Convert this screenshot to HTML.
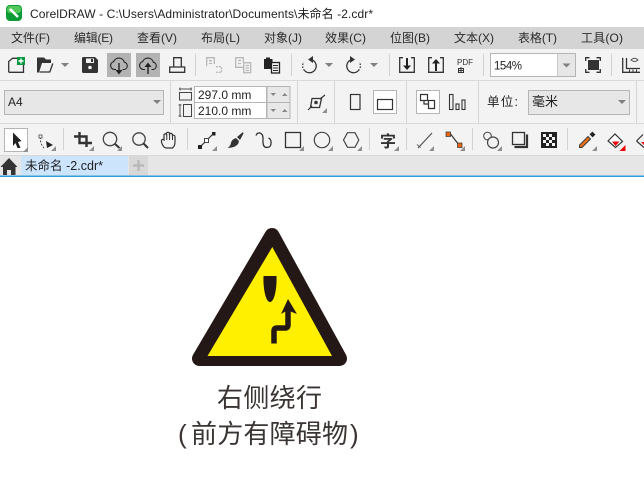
<!DOCTYPE html>
<html>
<head>
<meta charset="utf-8">
<style>
html,body{margin:0;padding:0;background:#fff;width:644px;height:496px;overflow:hidden}
svg{display:block}
text{font-family:"Liberation Sans","Noto Sans CJK SC",sans-serif;fill:#222;font-size:12px}
.m{font-size:12px;fill:#2a2a2a}
.s{stroke:#333;fill:none;stroke-width:1.3}
.g{stroke:#b8b8b8;fill:none;stroke-width:1.3}
</style>
</head>
<body>
<svg width="644" height="496" viewBox="0 0 644 496" xmlns="http://www.w3.org/2000/svg">
<defs>
<path id="c" d="M0 0V-5L-5 0Z" fill="#8f8f8f"/>
<path id="d" d="M0 0H8L4 4Z" fill="#808080"/>
<rect id="v" width="1" height="22" fill="#d2d2d2"/>
</defs>
<rect width="644" height="496" fill="#fff"/>

<!-- title bar -->
<rect x="6" y="5" width="16" height="16" rx="4" fill="#0d9b35"/>
<rect x="7" y="6" width="14" height="7" rx="3" fill="#52c85a"/>
<path d="M10 9L18 17" stroke="#fff" stroke-width="2.6"/>
<text x="30" y="18" textLength="343" lengthAdjust="spacing">CorelDRAW - C:\Users\Administrator\Documents\未命名 -2.cdr*</text>

<!-- menu -->
<rect y="27" width="644" height="22" fill="#d4d4d4"/>
<text class="m" x="11" y="42" textLength="39">文件(F)</text>
<text class="m" x="74" y="42" textLength="39">编辑(E)</text>
<text class="m" x="137" y="42" textLength="40">查看(V)</text>
<text class="m" x="201" y="42" textLength="39">布局(L)</text>
<text class="m" x="264" y="42" textLength="38">对象(J)</text>
<text class="m" x="325" y="42" textLength="41">效果(C)</text>
<text class="m" x="390" y="42" textLength="40">位图(B)</text>
<text class="m" x="454" y="42" textLength="40">文本(X)</text>
<text class="m" x="518" y="42" textLength="39">表格(T)</text>
<text class="m" x="581" y="42" textLength="42">工具(O)</text>

<!-- toolbars bg -->
<rect y="49" width="644" height="107" fill="#f3f3f3"/>
<rect y="80" width="644" height="1" fill="#d9d9d9"/>
<rect y="123" width="644" height="1" fill="#d9d9d9"/>
<rect y="155" width="644" height="1" fill="#d9d9d9"/>
<rect y="156" width="644" height="20" fill="#e6e6e6"/>
<rect y="175.500" width="644" height="1.500" fill="#2aa0dc"/>

<!-- toolbar 1 -->
<path class="s" d="M8.700 72.300V61.500L12.500 58.300H17M23.500 65V72.300H8.700"/>
<rect x="17" y="57" width="8" height="8" fill="#0b9a40"/>
<path d="M21 58.500V63.500M18.500 61H23.500" stroke="#fff" stroke-width="1.400"/>
<path d="M37 72.500V57.500H44L46 59.500H51V63H42L39 72.500Z" fill="#333"/>
<path class="s" d="M39.500 72H49.800L52.800 63.500"/>
<use href="#d" x="61" y="63"/>
<path d="M82 58.500Q82 57 83.500 57H95L98 60V71.500Q98 73 96.500 73H83.500Q82 73 82 71.500Z" fill="#333"/>
<rect x="86" y="58.500" width="8" height="4.500" fill="#f3f3f3"/>
<rect x="91" y="59" width="2" height="3" fill="#333"/>
<circle cx="90" cy="67.500" r="1.800" fill="#f3f3f3"/>

<rect x="107" y="53" width="24" height="24" fill="#b3b3b3"/>
<rect x="136" y="53" width="24" height="24" fill="#b3b3b3"/>
<path d="M116 69.500H114.500A4 4 0 0 1 113.700 61.600A5.600 5.600 0 0 1 124.300 62.200A3.700 3.700 0 0 1 124 69.500H122.500" fill="none" stroke="#222" stroke-width="1.100"/>
<path d="M119 63V71" stroke="#222" stroke-width="1.400"/>
<path d="M115.500 70H122.500L119 74.500Z" fill="#222"/>
<path d="M145 69.500H143.500A4 4 0 0 1 142.700 61.600A5.600 5.600 0 0 1 153.300 62.200A3.700 3.700 0 0 1 153 69.500H151.500" fill="none" stroke="#222" stroke-width="1.100"/>
<path d="M148 66V74" stroke="#222" stroke-width="1.400"/>
<path d="M144.500 67H151.500L148 62.500Z" fill="#222"/>
<path class="s" d="M173.700 67V57.700H181.300V67M169.700 67H184.700V72.300H169.700Z"/>

<use href="#v" x="195" y="54"/>
<path class="g" d="M206.700 66.300V57.700H214.300V64M209 60.700H212M209 63.500H212"/>
<path class="g" d="M216 66.700H221.500V72.300H216" stroke-dasharray="2 1"/>
<path class="g" d="M243 67.300H235.700V57.700H243.300V62"/>
<rect class="g" x="243.700" y="62.700" width="7" height="10"/>
<path class="g" d="M238 60.500H241M238 63.500H241M245.500 65.500H249M245.500 68H249M245.500 70.500H249"/>
<path d="M264 59H266V57.500H270V59H272.500V69H264Z" fill="#222"/>
<rect x="271.500" y="62.500" width="8" height="10.500" fill="#f3f3f3" stroke="#222" stroke-width="1.300"/>
<path d="M273 65.500H278M273 68H278M273 70.500H278" stroke="#222"/>
<use href="#v" x="291" y="54"/>

<path class="s" d="M311 59.500A6.700 6.700 0 1 1 304.500 70.500"/>
<path class="s" d="M304.500 70.500A6.700 6.700 0 0 1 303.800 62" stroke-dasharray="1.500 1.500"/>
<path d="M313 56L308 59.500L313 63Z" fill="#333"/>
<use href="#d" x="325" y="63"/>
<path class="s" d="M352 59.500A6.700 6.700 0 1 0 358.500 70.500"/>
<path class="s" d="M358.500 70.500A6.700 6.700 0 0 0 359.200 62" stroke-dasharray="1.500 1.500"/>
<path d="M350 56L355 59.500L350 63Z" fill="#333"/>
<use href="#d" x="370" y="63"/>
<use href="#v" x="389" y="54"/>

<path class="s" d="M403 57.700H399.700V72.300H414.300V57.700H411"/>
<path d="M407 58V67" stroke="#222" stroke-width="2"/>
<path d="M403 65.500H411L407 70Z" fill="#222"/>
<path class="s" d="M432 57.700H428.700V72.300H443.300V57.700H440"/>
<path d="M436 62V71" stroke="#222" stroke-width="2"/>
<path d="M432 63.500H440L436 59Z" fill="#222"/>
<text x="457" y="65" style="font-size:8px;fill:#333" textLength="16">PDF</text>
<path d="M458.500 72.500V68.500H463.500V72.500ZM461 67V72.500M458.500 70.500H463.500" stroke="#333" fill="none"/>
<use href="#v" x="483" y="54"/>

<rect x="490.500" y="53.500" width="85" height="23" fill="#fff" stroke="#b5b5b5"/>
<rect x="558" y="54" width="17" height="22" fill="#e6e6e6"/>
<rect x="557" y="54" width="1" height="22" fill="#c8c8c8"/>
<use href="#d" x="562.500" y="63.500"/>
<text x="494" y="69.500" style="font-size:11.500px" textLength="28">154%</text>
<rect x="588" y="60" width="11" height="10" fill="#333"/>
<path class="s" d="M589.500 57.700H585.700V61M596.500 57.700H600.300V61M589.500 72.300H585.700V69M596.500 72.300H600.300V69" stroke-width="1.200"/>
<use href="#v" x="611" y="54"/>
<path class="s" d="M622.700 57.700V72.300H640M626.500 58V68.500H640" stroke-width="1.300"/>
<path d="M629.500 72V69.500M633 72V69.500M636.500 72V69.500" stroke="#333"/>
<path d="M631 60Q634.500 56.500 638 60Q634.500 63 631 60Z" fill="none" stroke="#555"/>

<!-- toolbar 2 -->
<rect x="4.500" y="90.500" width="159" height="24" fill="#e7e7e7" stroke="#b5b5b5"/>
<text x="8" y="106" style="font-size:12px">A4</text>
<use href="#d" x="153" y="100"/>
<rect x="170" y="81" width="1" height="42" fill="#d6d6d6"/>

<path d="M179 89H192M180 87.500V90.500M191 87.500V90.500" stroke="#555"/>
<rect x="179.500" y="92.500" width="12" height="7.500" fill="none" stroke="#444"/>
<path d="M180 104V117M178.500 105H181.500M178.500 116H181.500" stroke="#555"/>
<rect x="183.500" y="104.500" width="8" height="12" fill="none" stroke="#444"/>
<rect x="194.500" y="86.500" width="72" height="16" fill="#fff" stroke="#b5b5b5"/>
<rect x="194.500" y="102.500" width="72" height="16" fill="#fff" stroke="#b5b5b5"/>
<rect x="267" y="86.500" width="23" height="32" fill="#e8e8e8" stroke="#b5b5b5"/>
<path d="M267 102.500H290" stroke="#b5b5b5"/>
<path d="M270.500 93H276L273.200 96ZM270.500 109H276L273.200 112Z" fill="#888"/>
<path d="M282 96H287.500L284.700 93ZM282 112H287.500L284.700 109Z" fill="#888"/>
<text x="198" y="99" style="font-size:12px">297.0 mm</text>
<text x="198" y="115" style="font-size:12px">210.0 mm</text>
<rect x="297" y="81" width="1" height="42" fill="#d6d6d6"/>
<rect x="334" y="81" width="1" height="42" fill="#d6d6d6"/>

<path d="M312 98.500H321.500L319.500 107.500H310.500Z" fill="none" stroke="#333" stroke-width="1.300"/>
<circle cx="316" cy="102.500" r="1.800" fill="#333"/>
<path d="M308 110L312 106M320 99L325 95" stroke="#333" stroke-width="1.200"/>
<use href="#c" x="327" y="113"/>
<rect x="350.500" y="94.500" width="9.500" height="15" fill="none" stroke="#333" stroke-width="1.200"/>
<rect x="373.500" y="90.500" width="23" height="23" fill="#fff" stroke="#b5b5b5"/>
<rect x="377.500" y="99.500" width="15" height="10" fill="none" stroke="#333" stroke-width="1.200"/>
<rect x="406" y="81" width="1" height="42" fill="#d6d6d6"/>
<rect x="416.500" y="90.500" width="23" height="23" fill="#fff" stroke="#b5b5b5"/>
<path d="M420.500 94.500H427.500V100.500H420.500Z M424 100.500V104H428.500M428.500 100.500H434.500V108.500H428.500Z" fill="none" stroke="#333" stroke-width="1.200"/>
<rect x="449.500" y="94.500" width="3.500" height="15" fill="none" stroke="#333" stroke-width="1.100"/>
<rect x="456" y="104" width="3" height="5.500" fill="none" stroke="#333" stroke-width="1.100"/>
<rect x="462" y="100" width="3" height="9.500" fill="none" stroke="#333" stroke-width="1.100"/>
<rect x="478" y="81" width="1" height="42" fill="#d6d6d6"/>
<text x="487" y="106" style="font-size:12.500px" textLength="31">单位:</text>
<rect x="528.500" y="90.500" width="101" height="24" fill="#e7e7e7" stroke="#b5b5b5"/>
<text x="532" y="106" style="font-size:13px">毫米</text>
<use href="#d" x="618" y="100"/>
<rect x="636" y="81" width="1" height="42" fill="#d6d6d6"/>

<!-- toolbar 3 -->
<rect x="4.500" y="128.500" width="23" height="23" fill="#fff" stroke="#b5b5b5"/>
<path d="M13 132.500L21.500 141L18 142L20.500 148H17.500L15.500 143L13 146Z" fill="#222"/>
<use href="#c" x="28" y="152"/>
<path d="M41 137Q39 142 44 148" fill="none" stroke="#444" stroke-dasharray="2 1.500"/>
<rect x="39" y="135" width="3" height="3" fill="#fff" stroke="#444" stroke-width=".8"/>
<path d="M46 141L53 145L47 148Z" fill="#222"/>
<use href="#c" x="56" y="151"/>
<use href="#v" x="63" y="128"/>
<path d="M74 136.500H86.500V147M79.500 132V143H92" fill="none" stroke="#333" stroke-width="2.400"/>
<use href="#c" x="94" y="151"/>
<circle cx="110" cy="139" r="6.700" fill="none" stroke="#444" stroke-width="1.300"/>
<path d="M115 144L119.500 148" stroke="#333" stroke-width="2"/>
<use href="#c" x="122" y="151"/>
<circle cx="139" cy="139" r="6.200" fill="none" stroke="#444" stroke-width="1.300"/>
<path d="M143.500 143.500L148 148" stroke="#333" stroke-width="2"/>
<path d="M164 147Q161 143 161.500 140.500Q162 138.500 164 140V134.500Q165.500 133 166.500 134.500V133Q168 131.500 169.500 133V134Q171 132.500 172.500 134.500V135.500Q174.500 134.500 175 136.500V142Q175 146 172.500 148H166Z" fill="none" stroke="#333" stroke-width="1.200"/>
<path d="M166.800 134.500V140M169.600 133.500V140M172.500 135V140" stroke="#333"/>
<use href="#v" x="187" y="128"/>
<path d="M200 147L213 134" stroke="#333" stroke-width="1.200"/>
<rect x="198" y="145" width="4" height="4" fill="#222"/>
<rect x="212" y="132" width="3.500" height="3.500" fill="#222"/>
<rect x="204.500" y="138.500" width="4" height="4" fill="#fff" stroke="#333" stroke-width=".9"/>
<use href="#c" x="217" y="151"/>
<path d="M243 132L237 137L240 140L243.500 133.500Z" fill="#333"/>
<path d="M236 138L239 141Q238.500 146 232 147.500L227.500 148Q230.500 146 231 143Q231.500 139.500 236 138Z" fill="#333"/>
<path d="M256 135.500Q257 132.500 260 133Q263.500 134 263 140Q262.500 147 266.500 147.500Q271.500 147.500 271 142Q271 139 268.500 138" fill="none" stroke="#333" stroke-width="1.300"/>
<rect x="285.500" y="132.500" width="15" height="15" fill="none" stroke="#333" stroke-width="1.300"/>
<use href="#c" x="304" y="151"/>
<circle cx="322" cy="140" r="7.700" fill="none" stroke="#444" stroke-width="1.200"/>
<use href="#c" x="333" y="151"/>
<path d="M343.500 140L347.500 132.700H355L358.800 140L355 147.300H347.500Z" fill="none" stroke="#444" stroke-width="1.200"/>
<use href="#c" x="362" y="151"/>
<use href="#v" x="369" y="128"/>
<text x="380" y="147" style="font-size:16px;font-weight:bold;fill:#333">字</text>
<use href="#c" x="399" y="151"/>
<use href="#v" x="406" y="128"/>
<path d="M418 148L432 133" stroke="#555" stroke-width="1.200"/>
<path d="M417 144.500L420.500 147.500" stroke="#666"/>
<use href="#c" x="434" y="151"/>
<path d="M449 133L459 146" stroke="#333" stroke-width="1.200" transform="translate(0,-1)"/>
<rect x="446" y="132" width="4.500" height="4.500" fill="#e8660f" stroke="#333" stroke-width=".7"/>
<rect x="457.500" y="143" width="4.500" height="4.500" fill="#e8660f" stroke="#333" stroke-width=".7"/>
<use href="#c" x="465" y="151"/>
<use href="#v" x="472" y="128"/>
<circle cx="487.500" cy="136" r="3.800" fill="none" stroke="#555" stroke-width="1.100"/>
<circle cx="493" cy="142.500" r="5.500" fill="#f3f3f3" stroke="#444" stroke-width="1.200"/>
<use href="#c" x="502" y="151"/>
<rect x="512.500" y="132.500" width="12" height="12" fill="none" stroke="#333" stroke-width="1.300"/>
<path d="M527 134.500V147H514.500" fill="none" stroke="#333" stroke-width="2.200"/>
<rect x="541" y="132" width="16" height="16" fill="#222"/>
<path d="M543 134h3v3h-3zM549 134h3v3h-3zM546 137h3v3h-3zM552 137h3v3h-3zM543 140h3v3h-3zM549 140h3v3h-3zM546 143h3v3h-3zM552 143h3v3h-3z" fill="#f3f3f3"/>
<use href="#v" x="567" y="128"/>
<path d="M591 133L594 136" stroke="#222" stroke-width="4"/>
<path d="M588 136.500L590.500 139L582 147.500H579.500V145Z" fill="#e8701a" stroke="#333" stroke-width=".9"/>
<use href="#c" x="597" y="151"/>
<path d="M608 141L615 134L622.500 141.500L615.500 147.500Z" fill="#fff" stroke="#333" stroke-width="1.200"/>
<path d="M612 141.500H619.500L615.500 146Z" fill="#f00000"/>
<path d="M625.500 145V151H619.500Z" fill="#f00000"/>
<path d="M636.500 141L643 134.500M636.500 141L644 147.500" fill="none" stroke="#333" stroke-width="1.200"/>
<path d="M641 142H644V145Z" fill="#f00000"/>

<!-- tab strip -->
<path d="M0.500 167L9 158L17.500 167H15.500V175H3V167Z" fill="#333"/>
<rect x="7" y="170" width="4" height="5" fill="#e6e6e6"/>
<rect x="21" y="156" width="107" height="19" fill="#cde4fd"/>
<text x="25" y="170" style="font-size:12.500px" textLength="78">未命名 -2.cdr*</text>
<rect x="129" y="156" width="19" height="19" fill="#d8d8d8"/>
<path d="M138.500 160V171M133 165.500H144" stroke="#b4b4b4" stroke-width="2"/>

<!-- sign -->
<path d="M272 235.500L199.500 358.500H339.500Z" fill="#231815" stroke="#231815" stroke-width="15" stroke-linejoin="round"/>
<path d="M272.300 247L207.500 356H332Z" fill="#fff000"/>
<path d="M263.500 276H276.500C277 288 274.500 302 270 302C265.500 302 263 288 263.500 276Z" fill="#231815"/>
<path d="M274 343.500V331Q274 328 277 328H285Q288 328 288 325V310" fill="none" stroke="#231815" stroke-width="5.500"/>
<path d="M288 299L297 314L290.500 311.500H285.500L281 314Z" fill="#231815"/>

<text x="217" y="407" style="font-size:26px;fill:#3a3533" textLength="105">右侧绕行</text>
<text x="178" y="443" style="font-size:26px;fill:#3a3533">(</text>
<text x="191" y="443" style="font-size:26px;fill:#3a3533" textLength="157">前方有障碍物</text>
<text x="350" y="443" style="font-size:26px;fill:#3a3533">)</text>
</svg>
</body>
</html>
